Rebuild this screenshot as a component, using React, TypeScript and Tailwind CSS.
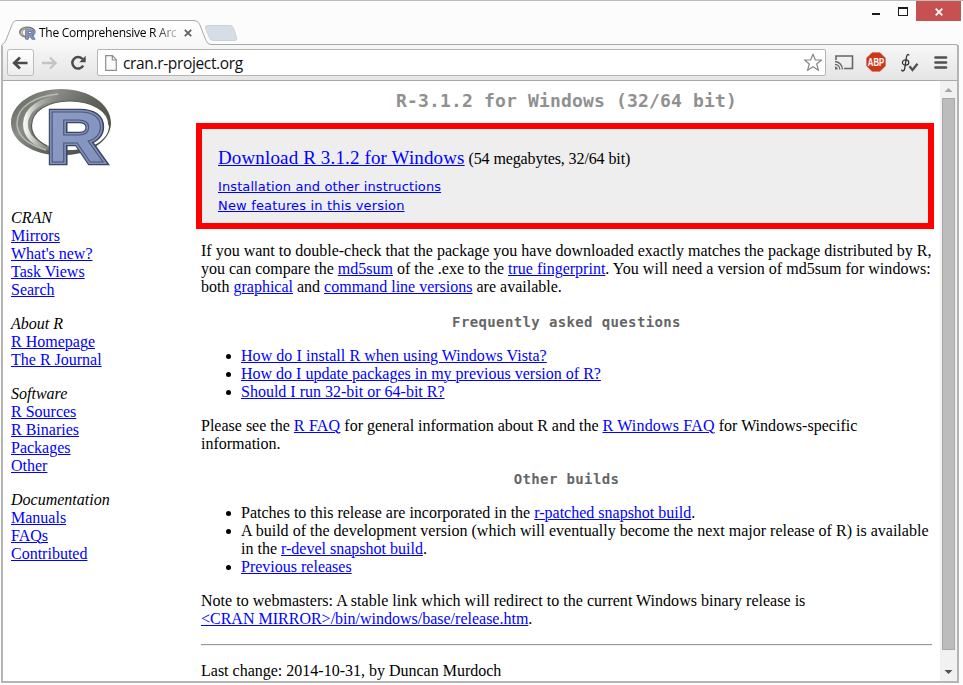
import React from "react";

const SERIF = "font-['Liberation_Serif',serif] text-[16px] leading-[18px]";

function A({ children, className = "" }: { children: React.ReactNode; className?: string }) {
  return (
    <a href="#" className={`text-[#0000ff] underline decoration-1 underline-offset-1 ${className}`}>
      {children}
    </a>
  );
}

function Line({ children, className = "" }: { children: React.ReactNode; className?: string }) {
  return <div className={`h-[18px] whitespace-nowrap ${className}`}>{children}</div>;
}

function RLogo({ id, width, height }: { id: string; width: number; height: number }) {
  const letter = {
    fontFamily: "Liberation Sans, sans-serif",
    fontWeight: 700,
    fontSize: 73,
    textLength: 58,
    lengthAdjust: "spacingAndGlyphs" as const,
    strokeLinejoin: "miter" as const,
  };
  return (
    <svg width={width} height={height} viewBox="1 1 102 78" className="block shrink-0 overflow-visible">
      <defs>
        <linearGradient id={`${id}ring`} x1="0" y1="0" x2="1" y2="0.6">
          <stop offset="0" stopColor="#8d9188" />
          <stop offset="0.16" stopColor="#70736b" />
          <stop offset="0.35" stopColor="#8b8e86" />
          <stop offset="0.65" stopColor="#63665e" />
          <stop offset="1" stopColor="#4c4f48" />
        </linearGradient>
        <linearGradient id={`${id}shine`} x1="0" y1="0" x2="1" y2="0">
          <stop offset="0" stopColor="#f4f5f2" />
          <stop offset="0.5" stopColor="#b4b6b0" stopOpacity="0.5" />
          <stop offset="1" stopColor="#777777" stopOpacity="0" />
        </linearGradient>
        <linearGradient id={`${id}blue`} x1="0" y1="0" x2="1" y2="1">
          <stop offset="0" stopColor="#8d9dc5" />
          <stop offset="1" stopColor="#8091bc" />
        </linearGradient>
      </defs>
      <path
        fillRule="evenodd"
        fill={`url(#${id}ring)`}
        d="M51 1C79 1 101 16 101 35C101 53 79 67.500 51 67.500C23 67.500 1 53 1 35C1 16 23 1 51 1ZM59.500 13C38 13 21.500 23 21.500 37.500C21.500 52 38 62 59.500 62C82 62 99 52 99 37.500C99 23 82 13 59.500 13Z"
      />
      <path d="M40 60C25 57 15.500 48 15.500 36C15.500 22 30 11 54 8.500" fill="none" stroke={`url(#${id}shine)`} strokeWidth="5" />
      <path d="M36 62C19 57 7 48 7 35C7 19 25 8 48 6" fill="none" stroke="#b9bcb4" strokeWidth="1.500" />
      <path d="M37 58C27 53 21.500 47 21.500 37.500C21.500 23 38 13 59.500 13C82 13 99 23 99 37.500" fill="none" stroke="#575a53" strokeWidth="1.200" />
      <text x="37" y="74" {...letter} fill="#3d4763" stroke="#3d4763" strokeWidth="6.500">
        R
      </text>
      <text x="36.700" y="73.500" {...letter} fill="#7f90bb" stroke="#7f90bb" strokeWidth="4">
        R
      </text>
      <text x="36.700" y="73.500" {...letter} fill={`url(#${id}blue)`} stroke="#4a5779" strokeWidth="1">
        R
      </text>
    </svg>
  );
}

function TabStrip() {
  return (
    <svg width="963" height="46" viewBox="0 0 963 46" className="absolute left-0 top-[-1px]">
      <defs>
        <linearGradient id="tab" x1="0" y1="0" x2="0" y2="1">
          <stop offset="0" stopColor="#ffffff" />
          <stop offset="1" stopColor="#f7f7f7" />
        </linearGradient>
      </defs>
      <path d="M2 46V45Q5 43 6 40L12.500 23.500Q13.500 20.500 17 20.500H194Q198 20.500 199.500 24L206 40.500Q207.500 44 211 44L211 46Z" fill="url(#tab)" />
      <path d="M1.500 46Q2 44 3.500 43.500Q5 43 6 40L12.500 23.500Q13.500 20.500 17 20.500H194Q198 20.500 199.500 24L206 40.500Q207.500 44.500 211 44.500H955Q958 44.500 958.500 46" fill="none" stroke="#a9a9a9" />
      <path d="M207.500 25.500H230Q232.500 25.500 233.500 28L236.500 37.500Q237.500 40.500 234 40.500H214Q210.500 40.500 209.500 38L205.500 28Q205 25.500 207.500 25.500Z" fill="#d7dde6" stroke="#cfd1d4" />
    </svg>
  );
}

function WindowButtons() {
  return (
    <div className="ml-auto mr-[2px] flex h-[20px]">
      <svg width="50" height="20" viewBox="866 1 50 20" className="block">
        <path d="M872 13h8v2h-8zM898 7h10v9h-10zM899 9v6h8V9z" fill="#1b1b1b" fillRule="evenodd" />
      </svg>
      <div className="flex h-[20px] w-[45px] items-center justify-center bg-[#c75050]">
        <svg width="8" height="8" viewBox="0 0 8 8" className="mt-[1px]">
          <path d="M.7 .7L7.300 7.300M7.300 .7L.7 7.300" stroke="#fff" strokeWidth="1.700" />
        </svg>
      </div>
    </div>
  );
}

function Toolbar() {
  return (
    <div className="flex h-[35px] items-center bg-gradient-to-b from-[#f7f7f7] to-[#e5e5e5]">
      <div className="ml-[4px] flex h-[27px] w-[27px] items-center justify-center rounded-[3px] border border-[#bdbdbd] bg-gradient-to-b from-white to-[#ededed]">
        <svg width="17" height="14" viewBox="0 0 17 14">
          <path d="M8 1.500L2.200 7L8 12.500M2.500 7H15.500" fill="none" stroke="#4a4a4a" strokeWidth="2.700" />
        </svg>
      </div>
      <svg width="17" height="14" viewBox="0 0 17 14" className="ml-[7px]">
        <path d="M9 1.500L14.500 7L9 12.500M14 7H1" fill="none" stroke="#c3c3c3" strokeWidth="2.300" />
      </svg>
      <svg width="17" height="16" viewBox="0 0 17 16" className="ml-[12px]">
        <path d="M13.200 10.700A5.800 5.800 0 1 1 12.600 4" fill="none" stroke="#4b4b4b" strokeWidth="2.500" />
        <path d="M15.700 .8V7.200H9.300Z" fill="#4b4b4b" />
      </svg>
      <div className="ml-[10px] flex h-[27px] w-[729px] items-center rounded-[2px] border border-[#b5b5b5] bg-white">
        <svg width="12" height="16" viewBox="0 0 12 16" className="ml-[7px]">
          <path d="M.7 .7H7.500L11.300 4.700V15.300H.7ZM7.300 .7V5H11.300" fill="#fbfbfb" stroke="#8d8d8d" strokeWidth="1.200" />
        </svg>
        <span className="ml-[6px] whitespace-nowrap font-['Open_Sans',sans-serif] text-[15.500px] leading-[20px] tracking-[-0.35px] text-[#111]">
          cran.r-project.org
        </span>
        <svg width="20" height="19" viewBox="0 0 20 19" className="ml-auto mr-[2px]">
          <path d="M10 1.200L12.400 7H18.500L13.700 11L15.500 17.300L10 13.700L4.500 17.300L6.300 11L1.500 7H7.600Z" fill="white" stroke="#858585" strokeWidth="1.200" strokeLinejoin="round" />
        </svg>
      </div>
      <svg width="20" height="17" viewBox="0 0 20 17" className="ml-[8px] mt-[-1px]">
        <path d="M2 6V2H18.500V14.500H10" fill="none" stroke="#666" strokeWidth="1.600" />
        <path d="M1 7.500A8 8 0 0 1 8.500 15.500M1 10.300A5 5 0 0 1 5.800 15.500" fill="none" stroke="#666" strokeWidth="1.300" />
        <path d="M1 12.500A3 3 0 0 1 3.700 15.500H1Z" fill="#666" />
      </svg>
      <svg width="20" height="20" viewBox="0 0 20 20" className="ml-[12px] mt-[-1px] overflow-visible">
        <path d="M6 .7H14L19.300 6V14L14 19.300H6L.7 14V6Z" fill="#cf3719" stroke="#b43a25" strokeWidth="0.500" />
        <text x="1.800" y="13.900" fontFamily="Liberation Sans, sans-serif" fontWeight="700" fontSize="10.500" textLength="16.400" lengthAdjust="spacingAndGlyphs" fill="white">
          ABP
        </text>
      </svg>
      <svg width="20" height="20" viewBox="0 0 20 20" className="ml-[14px] mt-[1px]">
        <path d="M8.900 2.500Q8.700 .9 7.500 1.700Q6.500 2.500 6.300 5L4.800 15Q4.400 18 2.800 18Q1.700 18 1.800 16.500" fill="none" stroke="#333" strokeWidth="1.300" />
        <ellipse cx="5.600" cy="9.500" rx="3.200" ry="2.700" fill="none" stroke="#333" strokeWidth="1.200" />
        <path d="M9.500 13.300L12.500 17L17.500 10.700" fill="none" stroke="#505050" strokeWidth="2.300" />
      </svg>
      <svg width="14" height="13" viewBox="0 0 14 13" className="ml-[14px]">
        <path d="M1.500 1.500H12M1.500 6.500H12M1.500 11.500H12" stroke="#505050" strokeWidth="2.700" strokeLinecap="round" />
      </svg>
    </div>
  );
}

const GROUPS = [
  { title: "CRAN", links: ["Mirrors", "What's new?", "Task Views", "Search"] },
  { title: "About R", links: ["R Homepage", "The R Journal"] },
  { title: "Software", links: ["R Sources", "R Binaries", "Packages", "Other"] },
  { title: "Documentation", links: ["Manuals", "FAQs", "Contributed"] },
];

function Sidebar() {
  return (
    <nav className={`w-[193px] shrink-0 pl-[8px] pt-[8px] text-black ${SERIF}`}>
      <RLogo id="big" width={102} height={78} />
      <div className="mt-[42px] flex flex-col gap-[16px]">
        {GROUPS.map((g) => (
          <div key={g.title}>
            <Line>
              <em>{g.title}</em>
            </Line>
            {g.links.map((l) => (
              <Line key={l}>
                <A>{l}</A>
              </Line>
            ))}
          </div>
        ))}
      </div>
    </nav>
  );
}

function Bullet({ children }: { children: React.ReactNode }) {
  return (
    <li className="flex">
      <span className="mr-[10px] mt-[7px] h-[5px] w-[5px] shrink-0 rounded-full bg-black" />
      <div>{children}</div>
    </li>
  );
}

function Main() {
  return (
    <main className={`flex w-[739px] shrink-0 flex-col text-black ${SERIF}`}>
      <h1 className="mt-[7px] h-[26px] whitespace-nowrap pl-[2px] text-center font-['DejaVu_Sans_Mono',monospace] text-[18px] font-bold leading-[26px] tracking-[0.17px] text-[#909090]">
        R-3.1.2 for Windows (32/64 bit)
      </h1>
      <section className="mt-[9px] h-[106px] w-[738px] border-[6px] border-[#ff0000] bg-[#eeeeee] pl-[16px] pt-[18px]">
        <div className="h-[22px] whitespace-nowrap leading-[22px]">
          <A className="text-[19px] tracking-[0.14px]">Download R 3.1.2 for Windows</A>
          <span className="tracking-[-0.11px]"> (54 megabytes, 32/64 bit)</span>
        </div>
        <div className="mt-[8px] whitespace-nowrap font-['DejaVu_Sans',sans-serif] text-[13px] leading-[19px]">
          <div>
            <A className="tracking-[0.1px]">Installation and other instructions</A>
          </div>
          <div>
            <A className="tracking-[0.17px]">New features in this version</A>
          </div>
        </div>
      </section>
      <div className="pl-[5px]">
        <div className="mt-[13px]">
          <Line>If you want to double-check that the package you have downloaded exactly matches the package distributed by R,</Line>
          <Line>
            you can compare the <A>md5sum</A> of the .exe to the <A>true fingerprint</A>
            <span className="tracking-[0.03px]">. You will need a version of md5sum for windows:</span>
          </Line>
          <Line>
            both <A>graphical</A> and <A>command line versions</A> are available.
          </Line>
        </div>
        <h2 className="mt-[17px] h-[18px] w-[731px] text-center font-['DejaVu_Sans_Mono',monospace] text-[14px] font-bold tracking-[0.37px] text-[#666]">
          Frequently asked questions
        </h2>
        <ul className="mt-[16px] pl-[25px]">
          <Bullet><Line><A className="tracking-[0.05px]">How do I install R when using Windows Vista?</A></Line></Bullet>
          <Bullet><Line><A>How do I update packages in my previous version of R?</A></Line></Bullet>
          <Bullet><Line><A>Should I run 32-bit or 64-bit R?</A></Line></Bullet>
        </ul>
        <div className="mt-[16px]">
          <Line>
            Please see the <A className="tracking-[0.2px]">R FAQ</A> for general information about R and the{" "}
            <A className="tracking-[0.17px]">R Windows FAQ</A>
            <span className="tracking-[0.03px]"> for Windows-specific</span>
          </Line>
          <Line>information.</Line>
        </div>
        <h2 className="mt-[17px] h-[18px] w-[731px] text-center font-['DejaVu_Sans_Mono',monospace] text-[14px] font-bold tracking-[0.37px] text-[#666]">
          Other builds
        </h2>
        <ul className="mt-[16px] pl-[25px]">
          <Bullet><Line>Patches to this release are incorporated in the <A>r-patched snapshot build</A>.</Line></Bullet>
          <Bullet>
            <Line className="tracking-[0.01px]">A build of the development version (which will eventually become the next major release of R) is available</Line>
            <Line>in the <A>r-devel snapshot build</A>.</Line>
          </Bullet>
          <Bullet><Line><A>Previous releases</A></Line></Bullet>
        </ul>
        <div className="mt-[16px]">
          <Line className="tracking-[0.025px]">Note to webmasters: A stable link which will redirect to the current Windows binary release is</Line>
          <Line><A>&lt;CRAN MIRROR&gt;/bin/windows/base/release.htm</A>.</Line>
        </div>
        <hr className="mt-[16px] h-[2px] w-[731px] border-0 border-b border-t border-b-[#eeeeee] border-t-[#9a9a9a]" />
        <Line className="mt-[16px]">Last change: 2014-10-31, by Duncan Murdoch</Line>
      </div>
    </main>
  );
}

function Scrollbar() {
  return (
    <div className="flex w-[17px] shrink-0 flex-col items-center bg-[#f1f1f1]">
      <svg width="17" height="17" viewBox="0 0 17 17">
        <path d="M8.500 7L12.500 11H4.500Z" fill="#a3a3a3" />
      </svg>
      <div className="h-[552px] w-[13px] border border-[#a8a8a8] bg-[#bcbcbc]" />
      <svg width="17" height="17" viewBox="0 0 17 17" className="mt-auto">
        <path d="M4.500 6H12.500L8.500 10Z" fill="#505050" />
      </svg>
    </div>
  );
}

export default function App() {
  return (
    <div className="relative flex h-[685px] w-[963px] flex-col overflow-hidden border-t border-[#bcbcbc] bg-[#fcfcfc]">
      <div className="relative z-10 flex h-[20px]">
        <WindowButtons />
      </div>
      <TabStrip />
      <div className="relative flex h-[24px] items-center pl-[19px]">
        <RLogo id="small" width={17} height={14} />
        <span className="ml-[3px] w-[137px] whitespace-nowrap bg-gradient-to-r from-black from-80% to-[#bbb] bg-clip-text font-['Open_Sans',sans-serif] text-[12px] leading-[18px] tracking-[-0.26px] text-transparent">
          The Comprehensive R Arc
        </span>
        <svg width="8" height="8" viewBox="0 0 8 8" className="ml-[8px]">
          <path d="M.8 .8L7.200 7.200M7.200 .8L.8 7.200" stroke="#606060" strokeWidth="1.800" />
        </svg>
      </div>
      <div className="ml-[1px] flex h-[638px] w-[958px] flex-col border-x-2 border-b-2 border-[#b4b4b4] bg-white">
        <Toolbar />
        <div className="flex min-h-0 flex-1 border-t border-[#a9a9a9]">
          <Sidebar />
          <div className="w-[744px] shrink-0 overflow-hidden">
            <Main />
          </div>
          <Scrollbar />
        </div>
      </div>
    </div>
  );
}
